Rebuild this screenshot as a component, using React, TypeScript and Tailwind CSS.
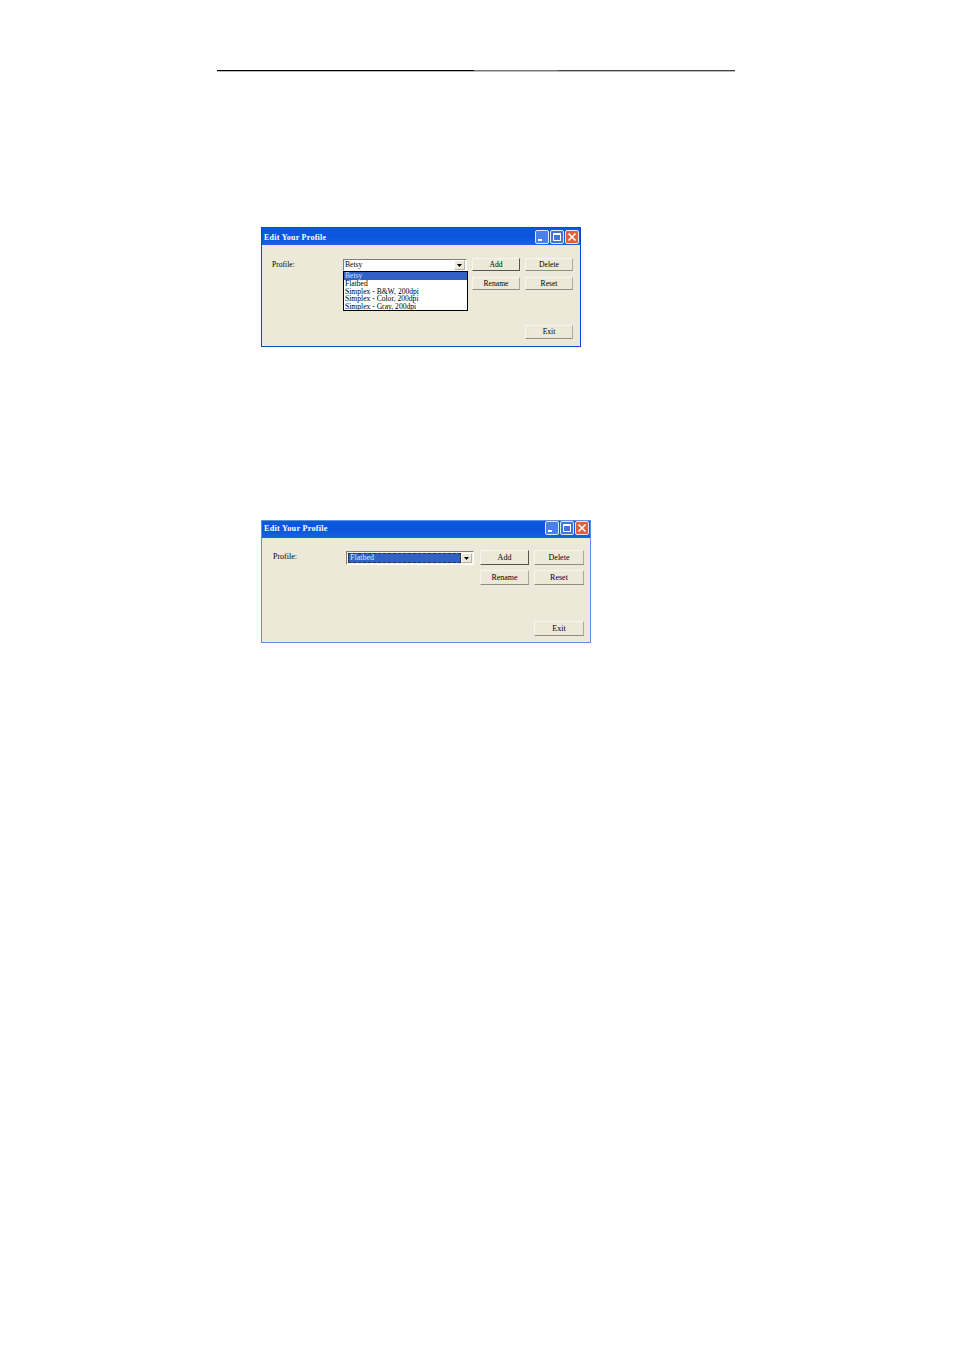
import { ReactNode } from "react";

const profiles = ["Betsy", "Flatbed", "Simplex - B&W, 200dpi", "Simplex - Color, 200dpi", "Simplex - Gray, 200dpi"];

function DialogButton({ label, primary, className }: { label: string; primary?: boolean; className: string }) {
  return (
    <button
      type="button"
      className={`${className} flex items-center justify-center border border-t-[#f7f6ef] border-l-[#f7f6ef] bg-[#ece9d8] leading-none text-black ${
        primary ? "border-t-[#77776f] border-r-[#55554f] border-b-[#55554f] border-l-[#77776f]" : "border-r-[#aaa99a] border-b-[#8f8e82]"
      }`}
    >
      {label}
    </button>
  );
}

function TitleButtons({ className }: { className: string }) {
  const frame = "flex h-[14px] w-[14px] justify-center rounded-[2px] border border-[#dfe8fb]";
  return (
    <div className={`flex gap-px ${className}`}>
      <div className={`${frame} items-end bg-[#4a80e8] pr-[4px] pb-[2px]`}>
        <div className="h-[2px] w-[4px] bg-white" />
      </div>
      <div className={`${frame} items-center bg-[#3f74e4]`}>
        <div className="h-[8px] w-[8px] border border-t-2 border-white" />
      </div>
      <div className={`${frame} items-center bg-[#e0603c]`}>
        <svg width="10" height="10" viewBox="0 0 10 10">
          <path d="M1.5 1.5 8.5 8.5M8.5 1.5 1.5 8.5" stroke="#fff" strokeWidth="1.6" />
        </svg>
      </div>
    </div>
  );
}

function ComboArrow({ className }: { className: string }) {
  return (
    <div className={`${className} flex items-center justify-center border border-t-white border-l-white border-r-[#b5b4a8] border-b-[#b5b4a8] bg-[#ece9d8]`}>
      <svg width="5" height="3" viewBox="0 0 5 3">
        <path d="M0 0h5L2.5 3z" fill="#000" />
      </svg>
    </div>
  );
}

function Window({
  frameClass,
  titleTextClass,
  controlsClass,
  children,
}: {
  frameClass: string;
  titleTextClass: string;
  controlsClass: string;
  children: ReactNode;
}) {
  return (
    <div className={`${frameClass} flex flex-col border bg-[#ece9d8] font-['Liberation_Serif',serif] antialiased`}>
      <div className="flex h-[17px] items-center justify-between bg-gradient-to-b from-[#0a5ae0] via-[#0a55dc] to-[#1a62e2] pr-px pl-[2px]">
        <span className={`${titleTextClass} leading-none font-bold text-white`}>Edit Your Profile</span>
        <TitleButtons className={controlsClass} />
      </div>
      {children}
    </div>
  );
}

export default function App() {
  return (
    <div className="h-[1351px] w-[954px] bg-white pt-[70px] pl-[217px]">
      <div className="flex h-[2px] w-[518px] flex-col">
        <div className="flex h-px">
          <div className="w-[257px] bg-black" />
          <div className="w-[84px] bg-[#777777]" />
          <div className="w-[177px] bg-[#444444]" />
        </div>
        <div className="h-px bg-[#bbbbbb]" />
      </div>

      <div className="mt-[155px] ml-[44px]">
        <Window
          frameClass="h-[120px] w-[320px] border-[#0a46d2]"
          titleTextClass="mt-[2px] text-[8px] tracking-[0.25px]"
          controlsClass=""
        >
          <div className="grid grid-cols-[66px_124px_48px_48px] grid-rows-[14px_14px] gap-x-[5px] gap-y-[5px] pt-[13px] pl-[10px] text-[7.6px]">
            <div className="flex items-center leading-none text-black">Profile:</div>
            <div className="relative mt-px flex h-[12px] w-[124px] items-center border border-t-[#7f7f78] border-l-[#7f7f78] border-r-white border-b-white bg-white pr-px pl-px leading-none text-black">
              <span className="flex-1">Betsy</span>
              <ComboArrow className="h-[10px] w-[11px]" />
              <div className="absolute top-[11px] -left-px flex h-[40px] w-[125px] flex-col border border-black bg-white leading-[7.8px]">
                {profiles.map((p, i) => (
                  <div key={p} className={`h-[7.8px] pl-px ${i === 0 ? "bg-[#2f62c4] text-[#dbe4f5]" : "text-black"}`}>
                    {p}
                  </div>
                ))}
              </div>
            </div>
            <DialogButton label="Add" primary className="h-[13px] w-[48px]" />
            <DialogButton label="Delete" className="h-[13px] w-[48px]" />
            <div className="col-start-3 row-start-2">
              <DialogButton label="Rename" className="h-[13px] w-[48px]" />
            </div>
            <div className="col-start-4 row-start-2">
              <DialogButton label="Reset" className="h-[13px] w-[48px]" />
            </div>
          </div>
          <div className="mt-[34px] flex justify-end pr-[7px] text-[7.6px]">
            <DialogButton label="Exit" className="h-[14px] w-[48px]" />
          </div>
        </Window>
      </div>

      <div className="mt-[173px] ml-[44px]">
        <Window
          frameClass="h-[123px] w-[330px] border-[#5f8fe0]"
          titleTextClass="-mt-[1px] text-[8.2px] tracking-[0.25px]"
          controlsClass="-mt-[3px]"
        >
          <div className="grid grid-cols-[68px_129px_49px_50px] grid-rows-[15px_15px] gap-x-[5px] gap-y-[5px] pt-[12px] pl-[11px] text-[8px]">
            <div className="-mt-px flex items-center leading-none text-black">Profile:</div>
            <div className="mt-px flex h-[14px] w-[128px] items-center border border-t-[#7f7f78] border-l-[#7f7f78] border-r-white border-b-white bg-[#f5f4ec] p-px">
              <div className="flex h-full flex-1 items-center border border-dashed border-[#333] bg-[#2f62c4] pl-px leading-none text-[#dbe4f5]">
                Flatbed
              </div>
              <ComboArrow className="h-full w-[11px]" />
            </div>
            <DialogButton label="Add" primary className="h-[15px] w-[49px]" />
            <DialogButton label="Delete" className="h-[15px] w-[50px]" />
            <div className="col-start-3 row-start-2">
              <DialogButton label="Rename" className="h-[15px] w-[49px]" />
            </div>
            <div className="col-start-4 row-start-2">
              <DialogButton label="Reset" className="h-[15px] w-[50px]" />
            </div>
          </div>
          <div className="mt-[36px] flex justify-end pr-[6px] text-[8px]">
            <DialogButton label="Exit" className="h-[15px] w-[50px]" />
          </div>
        </Window>
      </div>
    </div>
  );
}
